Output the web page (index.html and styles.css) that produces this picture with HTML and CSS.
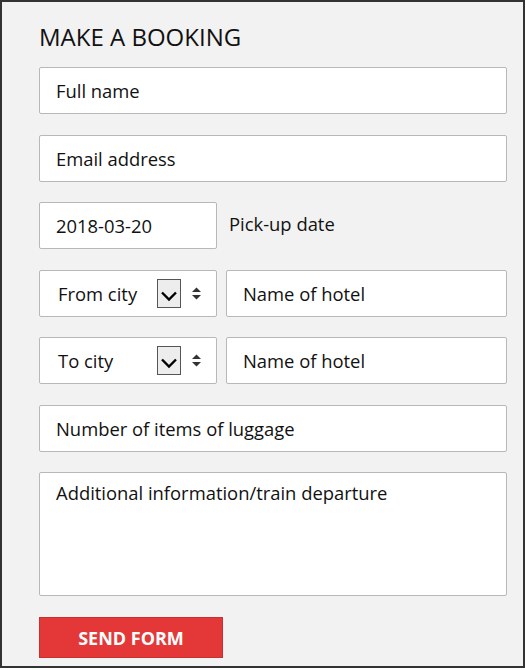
FILE: index.html
```html
<!DOCTYPE html>
<html>
<head>
<meta charset="utf-8">
<title>Make a booking</title>
<link rel="stylesheet" href="styles.css">
</head>
<body>
<div class="frame">
  <form class="booking">
    <h1 class="title">MAKE A BOOKING</h1>
    <div class="field">Full name</div>
    <div class="field">Email address</div>
    <div class="row">
      <div class="field short">2018-03-20</div>
      <span class="label">Pick-up date</span>
    </div>
    <div class="row">
      <div class="field short select">
        <span class="select-text">From city</span>
        <span class="drop"><svg width="22" height="27" viewBox="0 0 22 27"><polyline points="4,12.5 11,19.5 18,12.5" fill="none" stroke="#000" stroke-width="2.4"/></svg></span>
        <svg class="spin" width="11" height="13" viewBox="0 0 11 13"><polygon points="1,5 5.5,0.5 10,5" fill="#333"/><polygon points="1,8 5.5,12.5 10,8" fill="#333"/></svg>
      </div>
      <div class="field grow">Name of hotel</div>
    </div>
    <div class="row">
      <div class="field short select">
        <span class="select-text">To city</span>
        <span class="drop"><svg width="22" height="27" viewBox="0 0 22 27"><polyline points="4,12.5 11,19.5 18,12.5" fill="none" stroke="#000" stroke-width="2.4"/></svg></span>
        <svg class="spin" width="11" height="13" viewBox="0 0 11 13"><polygon points="1,5 5.5,0.5 10,5" fill="#333"/><polygon points="1,8 5.5,12.5 10,8" fill="#333"/></svg>
      </div>
      <div class="field grow">Name of hotel</div>
    </div>
    <div class="field">Number of items of luggage</div>
    <div class="field area">Additional information/train departure</div>
    <div class="send">SEND FORM</div>
  </form>
</div>
</body>
</html>
```

FILE: styles.css
```css
html, body {
  margin: 0;
  padding: 0;
  background: #ffffff;
}

.frame {
  box-sizing: border-box;
  width: 525px;
  height: 668px;
  border: 2px solid #333333;
  background: #f2f2f2;
  padding: 0 16px 0 37px;
  font-family: "Open Sans", "Noto Sans", sans-serif;
  color: #111111;
}

.booking {
  display: flex;
  flex-direction: column;
  width: 468px;
}

.title {
  margin: 20px 0 15px;
  font-size: 24px;
  line-height: 30px;
  font-weight: 400;
  color: #111111;
}

.field {
  box-sizing: border-box;
  height: 47px;
  border: 1px solid #b8b8b8;
  border-radius: 2px;
  background: #ffffff;
  padding: 0 16px;
  display: flex;
  align-items: center;
  font-size: 18.4px;
  margin-bottom: 20.5px;
  white-space: nowrap;
}

.row {
  display: flex;
  align-items: center;
  gap: 9px;
  margin-bottom: 20.5px;
}

.row .field {
  margin-bottom: 0;
}

.short {
  width: 178px;
  flex: none;
}

.grow {
  flex: 1;
}

.label {
  margin-left: 3px;
  font-size: 18.4px;
  padding-bottom: 5px;
}

.select {
  padding: 0 14px 0 18px;
}

.select-text {
  flex: 1;
}

.drop {
  box-sizing: border-box;
  width: 24px;
  height: 29px;
  border: 1px solid #555555;
  background: #ededed;
  display: flex;
}

.spin {
  margin-left: 10px;
}

.area {
  height: 124px;
  align-items: flex-start;
  padding-top: 8px;
  line-height: 24px;
  margin-bottom: 21px;
}

.send {
  box-sizing: border-box;
  width: 184px;
  height: 41px;
  background: #e43838;
  border: 1px solid #c93030;
  color: #ffffff;
  font-weight: 700;
  font-size: 18px;
  display: flex;
  align-items: center;
  justify-content: center;
}
```
